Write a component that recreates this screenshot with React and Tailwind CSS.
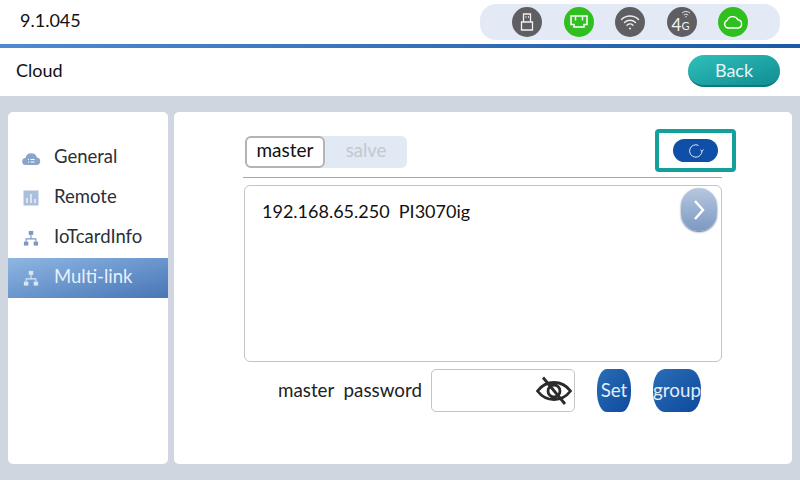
import React from 'react';

const StatusIcon = ({ on, children }) => (
  <div className={`w-[30px] h-[30px] rounded-full flex items-center justify-center ${on ? 'bg-[#2fbf1f]' : 'bg-[#5f5f63]'}`}>
    {children}
  </div>
);

const NetIcon = ({ color }) => (
  <svg width="16" height="16" viewBox="0 0 18 18" fill="none" stroke={color} strokeWidth="1.200">
    <rect x="6.500" y="1" width="5" height="4.500" fill={color} stroke="none" />
    <path d="M9 5.500v4.500M3.500 13v-3h11v3" />
    <rect x="1" y="13" width="5" height="4.500" fill={color} stroke="none" />
    <rect x="12" y="13" width="5" height="4.500" fill={color} stroke="none" />
  </svg>
);

const menu = [
  {
    label: 'General',
    icon: (
      <svg width="19" height="15" viewBox="0 0 19 15">
        <path d="M4 14a3.500 3.500 0 0 1-.6-7A6 6 0 0 1 15 6.500a3.800 3.800 0 0 1 0 7.500z" fill="#8ba5c9" />
        <path d="M6 8.500h1M8.500 8.500h4M6 11h1M8.500 11h4" stroke="#fff" strokeWidth="1" />
      </svg>
    ),
  },
  {
    label: 'Remote',
    icon: (
      <svg width="16" height="16" viewBox="0 0 16 16">
        <rect x="0.500" y="0.500" width="15" height="15" fill="#a9bfdc" />
        <path d="M4 13V8M8 13V4M12 13V9" stroke="#fff" strokeWidth="1.200" />
      </svg>
    ),
  },
  { label: 'IoTcardInfo', icon: <NetIcon color="#7d97bf" /> },
  { label: 'Multi-link', icon: <NetIcon color="#dbe6f3" />, active: true },
];

export default function App() {
  return (
    <div className="w-[800px] h-[480px] overflow-hidden flex flex-col bg-[#cfd6e0] font-['Lato','Liberation_Sans',sans-serif] text-[#222]">
      {/* status bar */}
      <div className="h-[44px] bg-white flex items-center justify-between px-[20px]">
        <span className="text-[18px] text-[#111] pb-[4px]">9.1.045</span>
        <div className="w-[300px] h-[36px] rounded-[16px] bg-[#e3eaf5] flex items-center pl-[32px] gap-[21.500px]">
          <StatusIcon>
            <svg width="16" height="20" viewBox="0 0 16 20" fill="none" stroke="#f2f2f2" strokeWidth="1.300">
              <path d="M4.500 10V2h7v8M2.500 10h11v8h-11z" />
              <path d="M6.500 5h1M9 5h1" />
            </svg>
          </StatusIcon>
          <StatusIcon on>
            <svg width="20" height="16" viewBox="0 0 20 16" fill="none" stroke="#fff" strokeWidth="1.500">
              <path d="M2 2h16v8.500h-3V13H5v-2.500H2z" />
              <path d="M6.500 3v3.500M13.500 3v3.500" />
            </svg>
          </StatusIcon>
          <StatusIcon>
            <svg width="20" height="18" viewBox="0 0 20 18" fill="none" stroke="#eee" strokeWidth="1.400" strokeLinecap="round">
              <path d="M1.500 6.500a12 12 0 0 1 17 0M4.500 9.500a8 8 0 0 1 11 0M7 12.200a4.300 4.300 0 0 1 6 0" />
              <circle cx="10" cy="15.500" r="1" fill="#eee" stroke="none" />
            </svg>
          </StatusIcon>
          <StatusIcon>
            <div className="relative w-[22px] h-[24px] text-[#f2f2f2]">
              <span className="absolute left-[1px] bottom-[0px] text-[17px] leading-[18px]">4</span>
              <span className="absolute left-[11px] bottom-[1px] text-[11px] leading-[14px]">G</span>
              <svg className="absolute left-[10px] top-[0px]" width="10" height="8" viewBox="0 0 10 8" fill="none" stroke="#eee" strokeWidth="0.900">
                <path d="M1 3a6 6 0 0 1 8 0M2.800 5a3.500 3.500 0 0 1 4.400 0" />
                <circle cx="5" cy="6.800" r="0.700" fill="#eee" stroke="none" />
              </svg>
            </div>
          </StatusIcon>
          <StatusIcon on>
            <svg width="22" height="16" viewBox="0 0 22 16" fill="none" stroke="#fff" strokeWidth="1.400" strokeLinejoin="round">
              <path d="M6 14a4 4 0 0 1-.8-7.700A6 6 0 0 1 16 5.800 4.200 4.200 0 0 1 16.500 14z" />
            </svg>
          </StatusIcon>
        </div>
      </div>
      <div className="h-[4px] bg-gradient-to-r from-[#4f8ad0] to-[#1c5aa6]" />

      {/* title bar */}
      <div className="h-[48px] bg-white flex items-center justify-between pl-[16px] pr-[20px]">
        <span className="text-[18px] text-[#111] pb-[3px]">Cloud</span>
        <div className="w-[92px] h-[32px] mb-[2px] rounded-full bg-gradient-to-br from-[#2fc0bb] to-[#0f8d92] border-b-2 border-[#0c7a7e] text-[#e6f6f6] text-[18px] flex items-center justify-center">
          Back
        </div>
      </div>

      {/* body */}
      <div className="flex-1 flex gap-[6px] py-[16px] px-[8px]">
        <div className="w-[160px] bg-white rounded-[5px] pt-[26px]">
          {menu.map((m) => (
            <div
              key={m.label}
              className={`h-[40px] flex items-center ${m.active ? 'bg-gradient-to-br from-[#8fb7e3] to-[#4876b6] text-[#e8f1fb]' : 'text-[#2c2f36]'}`}
            >
              <div className="w-[46px] flex justify-center">{m.icon}</div>
              <span className="text-[18.500px] pb-[2px]">{m.label}</span>
            </div>
          ))}
        </div>

        <div className="flex-1 bg-white rounded-[5px] px-[70px] pt-[17px]">
          <div className="flex items-center justify-between h-[43px] mr-[-14px]">
            <div className="w-[162px] h-[32px] ml-[1px] mt-[2px] rounded-[6px] bg-[#e1e9f4] flex items-center text-[19px]">
              <div className="w-[80px] h-[32px] rounded-[6px] bg-white border-2 border-[#b4b4b4] flex items-center justify-center text-[#111] pb-[2px]">
                master
              </div>
              <div className="flex-1 text-center text-[#c3c8ce] text-[18.500px] pb-[2px]">salve</div>
            </div>
            <div className="w-[81px] h-[43px] rounded-[4px] border-4 border-[#13a09a] flex items-center justify-center">
              <div className="w-[45px] h-[23px] rounded-full bg-[#0f4fa8] flex items-center justify-center">
                <svg width="18" height="18" viewBox="0 0 18 18" fill="none" stroke="#dfe9f7" strokeWidth="1">
                  <path d="M15 9A6.200 6.200 0 1 1 11.500 3.400" />
                  <path d="M13.300 7.800l1.700 1.500 1.500-1.800" />
                </svg>
              </div>
            </div>
          </div>
          <div className="mt-[5px] border-t border-[#a8a8a8] ml-[-1px]" />

          <div className="relative mt-[7px] h-[177px] border border-[#c4c4c4] rounded-[6px] pl-[17px] pt-[12px] text-[18px] text-[#111]">
            <span className="whitespace-pre">192.168.65.250  PI3070ig</span>
            <div className="absolute right-[4px] top-[2px] w-[36px] h-[43px] rounded-full bg-gradient-to-b from-[#b7c8df] to-[#7c99c2] shadow-[0_1px_2px_#5d6f8a] flex items-center justify-center">
              <svg width="16" height="28" viewBox="0 0 16 28" fill="none" stroke="#fff" strokeWidth="2.400">
                <path d="M4 5l8 9-8 9" />
              </svg>
            </div>
          </div>

          <div className="mt-[7px] flex items-center h-[43px] text-[18.800px] text-[#222]">
            <span className="ml-[34px] w-[153px] whitespace-pre">master  password</span>
            <div className="w-[144px] h-[43px] border border-[#c4c4c4] rounded-[5px] flex items-center justify-end pr-[2px]">
              <svg width="36" height="30" viewBox="0 0 36 30" fill="none" stroke="#2b2b2b" strokeWidth="2.800">
                <path d="M1.500 15C6 9 11.500 6.500 18 6.500S30 9 34.500 15C30 21 24.500 23.500 18 23.500S6 21 1.500 15z" />
                <circle cx="18" cy="15" r="6" />
                <path d="M7 1.500L29 28" />
              </svg>
            </div>
            <div className="ml-[22px] w-[34px] h-[43px] rounded-[10px/20px] bg-gradient-to-br from-[#2a6db5] to-[#0d4a9e] text-[#e4edf7] flex items-center justify-center">
              Set
            </div>
            <div className="ml-[22px] w-[48px] h-[43px] rounded-[12px/20px] bg-gradient-to-br from-[#2a6db5] to-[#0d4a9e] text-[#e4edf7] flex items-center justify-center whitespace-nowrap">
              group
            </div>
          </div>
        </div>
      </div>
    </div>
  );
}
